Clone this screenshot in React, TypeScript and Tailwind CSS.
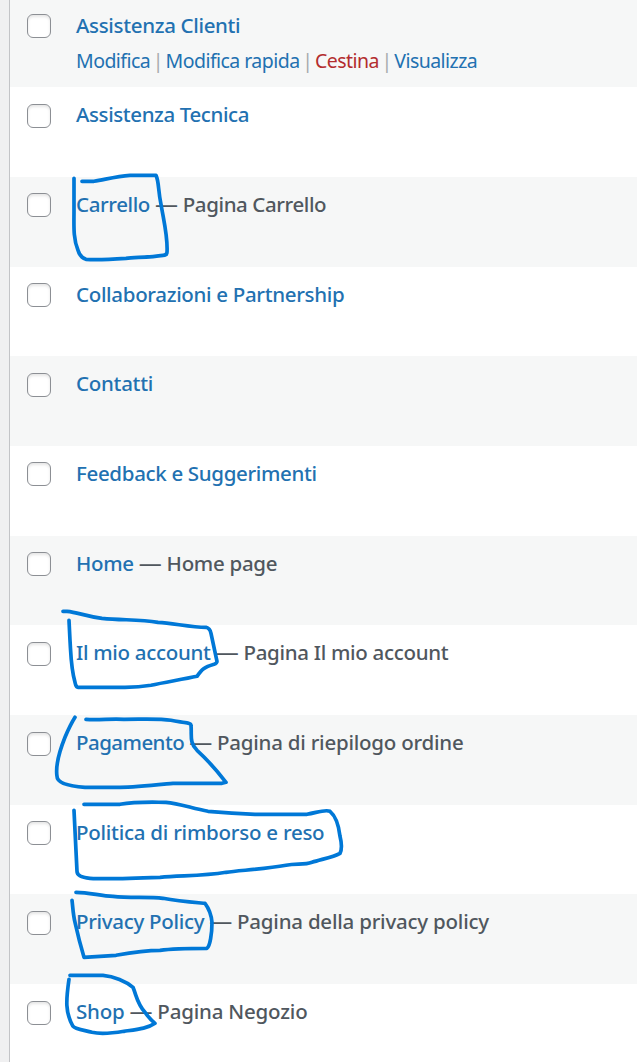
type Page = { title: string; tracking: string; note?: string; noteTracking?: string; actions?: boolean };

const pages: Page[] = [
  { title: 'Assistenza Clienti', tracking: 'tracking-[-0.33px]', actions: true },
  { title: 'Assistenza Tecnica', tracking: 'tracking-[-0.4px]' },
  { title: 'Carrello', tracking: 'tracking-[-0.38px]', note: 'Pagina Carrello', noteTracking: 'tracking-[-0.4px]' },
  { title: 'Collaborazioni e Partnership', tracking: 'tracking-[-0.32px]' },
  { title: 'Contatti', tracking: 'tracking-[-0.28px]' },
  { title: 'Feedback e Suggerimenti', tracking: 'tracking-[-0.33px]' },
  { title: 'Home', tracking: 'tracking-[-0.3px]', note: 'Home page', noteTracking: 'tracking-[-0.3px]' },
  { title: 'Il mio account', tracking: 'tracking-[-0.3px]', note: 'Pagina Il mio account', noteTracking: 'tracking-[-0.3px]' },
  { title: 'Pagamento', tracking: 'tracking-[-0.54px]', note: 'Pagina di riepilogo ordine', noteTracking: 'tracking-[-0.23px]' },
  { title: 'Politica di rimborso e reso', tracking: 'tracking-[-0.25px]' },
  { title: 'Privacy Policy', tracking: 'tracking-[-0.3px]', note: 'Pagina della privacy policy', noteTracking: 'tracking-[-0.22px]' },
  { title: 'Shop', tracking: 'tracking-[-0.2px]', note: 'Pagina Negozio', noteTracking: 'tracking-[-0.2px]' },
];

function RowActions() {
  return (
    <div className="mt-[9px] text-[19.5px] leading-[26px] font-normal tracking-[-0.55px] text-[#a7aaad] [word-spacing:-1.9px] [&>a]:[word-spacing:0px]">
      <a className="text-[#2271b1]">Modifica</a> | <a className="text-[#2271b1]">Modifica rapida</a> |{' '}
      <a className="text-[#b32d2e]">Cestina</a> | <a className="text-[#2271b1]">Visualizza</a>
    </div>
  );
}

function Row({ page, shaded }: { page: Page; shaded: boolean }) {
  return (
    <li className={`flex h-[89.7px] shrink-0 items-start pl-[17px] ${shaded ? 'bg-[#f6f7f7]' : 'bg-white'}`}>
      <span
        role="checkbox"
        aria-checked="false"
        aria-label={page.title}
        className="mt-[16.5px] size-6 shrink-0 rounded-[6px] border border-[#8c8f94] bg-white shadow-[inset_0_2px_3px_rgba(0,0,0,0.1)]"
      />
      <div className="ml-[25px] pt-[13px] text-[20.5px] leading-[28px] font-medium whitespace-nowrap text-[#50575e]">
        <div>
          <a className={`text-[#2271b1] ${page.tracking}`}>{page.title}</a>
          {page.note && (
            <>
              <span className="text-[23px] leading-none font-normal tracking-[-0.2px] [word-spacing:-0.8px]"> — </span>
              <span className={page.noteTracking}>{page.note}</span>
            </>
          )}
        </div>
        {page.actions && <RowActions />}
      </div>
    </li>
  );
}

const strokes = [
  'M82 181H94C106 179 116 176 130 175H156C159 181 158 190 161 204C164 222 168 237 167 252Q167 255 163 255C150 257 135 257 126 258C112 259 97 260 86 259Q80 257 78 250C73 238 74 225 74 211V178',
  'M63 611H67C78 612 85 616 102 618C123 620 139 619 158 622C174 623 191 627 206 627Q210 628 211 633L217 661Q217 663 214 664C204 667 202 669 197 676C183 679 165 682 151 685C139 687 132 687 125 687H78Q76 687 75 682C71 668 71 656 70 640L69 620',
  'M86 719C99 720 112 718 124 719C143 719 159 718 171 720C180 722 191 722 191 725C192 735 189 742 197 750C208 760 219 773 226 782L222 783H173C153 785 135 787 120 787H85C70 786 57 783 57 776C55 763 61 747 65 737Q70 725 75 717',
  'M84 804H120C137 801 154 802 166 802C179 803 192 808 208 811C221 812 235 813 255 814H307C318 812 325 809 330 811C336 816 339 827 340 836C342 844 342 849 340 853C333 857 321 859 312 862C304 865 297 863 286 865C264 869 240 870 226 872C202 876 181 875 160 877C134 878 108 879 90 878Q77 877 77 871L74 810',
  'M76 892C90 892 101 896 113 896C130 898 149 896 163 898C178 901 193 902 205 903Q211 911 212 922C212 933 210 946 207 948C192 948 174 948 160 950C146 950 127 953 116 955L84 957Q79 940 75 922C73 914 73 908 72 900',
  'M70 975H103C114 976 126 981 133 987C137 997 137 1003 145 1012Q149 1018 155 1023C148 1028 138 1029 124 1031C112 1033 100 1034 92 1032C85 1030 75 1029 73 1026C65 1012 66 1000 69 979',
];

function Annotations() {
  return (
    <svg
      className="pointer-events-none absolute inset-0"
      width="637"
      height="1062"
      viewBox="0 -0.3 637 1062"
      fill="none"
      stroke="#0078d7"
      strokeWidth="3.7"
      strokeLinecap="round"
      strokeLinejoin="round"
      aria-hidden="true"
    >
      {strokes.map((d) => (
        <path key={d} d={d} />
      ))}
    </svg>
  );
}

export default function App() {
  return (
    <main className="relative flex h-[1062px] w-[637px] overflow-hidden bg-[#f0f0f1] pl-[9px] font-['Noto_Sans','Open_Sans',sans-serif]">
      <ul className="-mt-[2.5px] flex grow flex-col border-l border-[#c3c4c7] bg-white">
        {pages.map((page, i) => (
          <Row key={page.title} page={page} shaded={i % 2 === 0} />
        ))}
      </ul>
      <Annotations />
    </main>
  );
}
